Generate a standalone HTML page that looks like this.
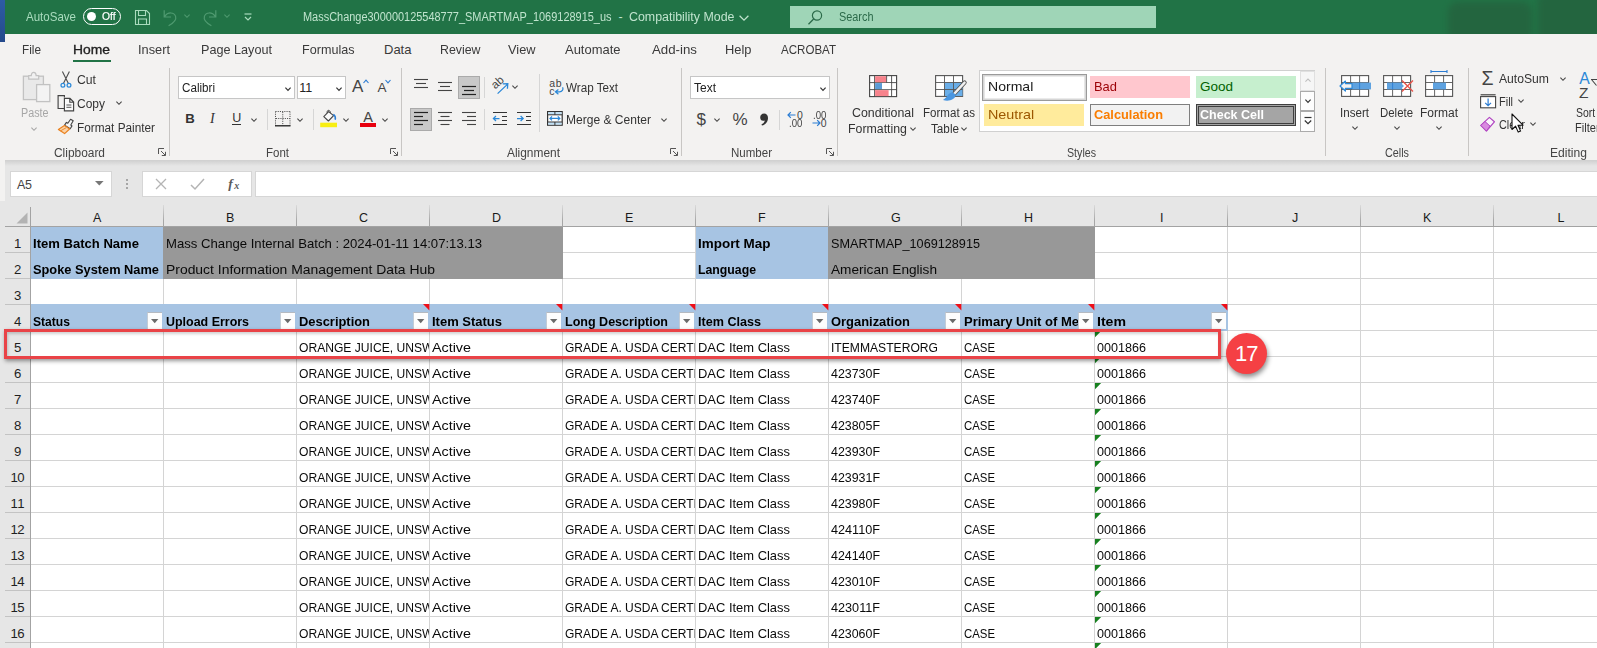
<!DOCTYPE html>
<html lang="en"><head><meta charset="utf-8"><title>Excel</title>
<style>
html,body{margin:0;padding:0;}
html{width:1597px;height:648px;overflow:hidden;background:#e6e6e6;}
body{width:1597px;height:648px;overflow:hidden;position:relative;background:#e6e6e6;font-family:"Liberation Sans", sans-serif;}
div,svg,span{position:absolute;box-sizing:border-box;}
svg{overflow:visible;}
.t{white-space:pre;line-height:1;display:block;}
</style></head>
<body>
<div style="left:0;top:0;width:1597px;height:648px;overflow:hidden;">
<div style="left:0px;top:0px;width:1597px;height:34px;background:#217346;"></div>
<div style="left:0px;top:34px;width:1597px;height:126px;background:#f3f2f1;"></div>
<div style="left:0px;top:159px;width:5px;height:42px;background:#f3f2f1;"></div>
<div style="left:0px;top:0px;width:5px;height:42px;background:linear-gradient(#2d5ca4,#244a8c);"></div>
<div style="left:5px;top:160px;width:1592px;height:6px;background:linear-gradient(rgba(0,0,0,0.10),rgba(0,0,0,0));"></div>
<span class="t" style="left:26px;top:10.3px;font-size:13px;color:#a9dbbd;transform:scaleX(0.8869);transform-origin:0 0;">AutoSave</span>
<div style="left:83px;top:8px;width:38px;height:17px;border:1.3px solid #fff;border-radius:9px;"></div>
<div style="left:87px;top:12px;width:9px;height:9px;border-radius:50%;background:#fff;"></div>
<span class="t" style="left:102px;top:11.27px;font-size:11.5px;color:#fff;transform:scaleX(0.8982);transform-origin:0 0;-webkit-text-stroke:0.2px #fff;">Off</span>
<svg style="left:134px;top:9px;" width="17" height="17" viewBox="0 0 17 17"><path d="M1.5 1.5h11l3 3v11h-14z M4.5 1.5v5h7v-5 M4.5 15.5v-5.5h8v5.5" fill="none" stroke="#a9dbbd" stroke-width="1.1"/></svg>
<svg style="left:162px;top:9px;" width="17" height="18" viewBox="0 0 17 18"><path d="M2.2 1.2v6.8h6.8 M2.6 7.6c3.2-5 9.6-4.6 11 -0.2c1.2 3.8-2.4 6.8-7 9.4" fill="none" stroke="#4f9a70" stroke-width="1.2"/></svg>
<svg style="left:182.4px;top:12px;" width="10" height="8" viewBox="0 0 10 8"><path d="M2.4 2.7 L5 5.3 L7.6 2.7" fill="none" stroke="#4f9a70" stroke-width="1.1"/></svg>
<svg style="left:201px;top:9px;" width="17" height="18" viewBox="0 0 17 18"><path d="M14.8 1.2v6.8h-6.8 M14.4 7.6c-3.2-5-9.6-4.6-11-0.2c-1.2 3.8 2.4 6.8 7 9.4" fill="none" stroke="#4f9a70" stroke-width="1.2"/></svg>
<svg style="left:221.5px;top:12px;" width="10" height="8" viewBox="0 0 10 8"><path d="M2.4 2.7 L5 5.3 L7.6 2.7" fill="none" stroke="#4f9a70" stroke-width="1.1"/></svg>
<svg style="left:243px;top:12px;" width="10" height="10" viewBox="0 0 10 10"><path d="M1.5 2h7" stroke="#a9dbbd" stroke-width="1.2"/><path d="M2 5l3 3l3-3" fill="none" stroke="#a9dbbd" stroke-width="1.2"/></svg>
<span class="t" style="left:303px;top:11.42px;font-size:12.5px;color:#c0e4ce;transform:scaleX(0.8761);transform-origin:0 0;">MassChange300000125548777_SMARTMAP_1069128915_us</span>
<span class="t" style="left:618.5px;top:11.42px;font-size:12.5px;color:#c0e4ce;letter-spacing:0.328px;">-</span>
<span class="t" style="left:628.5px;top:11.42px;font-size:12.5px;color:#c0e4ce;transform:scaleX(0.9925);transform-origin:0 0;">Compatibility Mode</span>
<svg style="left:738.5px;top:14px;" width="10" height="8" viewBox="0 0 10 8"><path d="M0.5999999999999996 1.7999999999999998 L5 6.2 L9.4 1.7999999999999998" fill="none" stroke="#c0e4ce" stroke-width="1.25"/></svg>
<div style="left:790px;top:6px;width:366px;height:22px;background:#9fd5b7;"></div>
<svg style="left:806px;top:9px;" width="18" height="18" viewBox="0 0 18 18"><circle cx="11" cy="6.5" r="4.6" fill="none" stroke="#2b6a49" stroke-width="1.2"/><path d="M7.6 10L2.5 15.2" stroke="#2b6a49" stroke-width="1.3"/></svg>
<span class="t" style="left:839px;top:10.92px;font-size:12.5px;color:#2b6a49;transform:scaleX(0.8710);transform-origin:0 0;">Search</span>
<div style="left:1400px;top:0;width:197px;height:34px;overflow:hidden;"><div style="left:48px;top:2px;width:84px;height:40px;background:#24643f;border-radius:10px;filter:blur(3px);opacity:.9;"></div><div style="left:138px;top:-6px;width:70px;height:50px;background:#24643f;border-radius:8px;filter:blur(3px);opacity:.9;"></div></div>
<span class="t" style="left:22px;top:43.0px;font-size:13px;color:#3a3a3a;transform:scaleX(0.9068);transform-origin:0 0;">File</span>
<span class="t" style="left:73px;top:43.0px;font-size:13px;color:#222;transform:scaleX(1.0667);transform-origin:0 0;-webkit-text-stroke:0.32px #222;">Home</span>
<span class="t" style="left:138px;top:43.0px;font-size:13px;color:#3a3a3a;transform:scaleX(0.9841);transform-origin:0 0;">Insert</span>
<span class="t" style="left:201px;top:43.0px;font-size:13px;color:#3a3a3a;transform:scaleX(0.9724);transform-origin:0 0;">Page Layout</span>
<span class="t" style="left:302px;top:43.0px;font-size:13px;color:#3a3a3a;transform:scaleX(0.9689);transform-origin:0 0;">Formulas</span>
<span class="t" style="left:384px;top:43.0px;font-size:13px;color:#3a3a3a;">Data</span>
<span class="t" style="left:440px;top:43.0px;font-size:13px;color:#3a3a3a;transform:scaleX(0.9501);transform-origin:0 0;">Review</span>
<span class="t" style="left:508px;top:43.0px;font-size:13px;color:#3a3a3a;transform:scaleX(0.9838);transform-origin:0 0;">View</span>
<span class="t" style="left:565px;top:43.0px;font-size:13px;color:#3a3a3a;transform:scaleX(0.9972);transform-origin:0 0;">Automate</span>
<span class="t" style="left:652px;top:43.0px;font-size:13px;color:#3a3a3a;transform:scaleX(1.0209);transform-origin:0 0;">Add-ins</span>
<span class="t" style="left:725px;top:43.0px;font-size:13px;color:#3a3a3a;transform:scaleX(0.9907);transform-origin:0 0;">Help</span>
<span class="t" style="left:781px;top:43.0px;font-size:13px;color:#3a3a3a;transform:scaleX(0.8887);transform-origin:0 0;">ACROBAT</span>
<div style="left:73px;top:59.5px;width:38px;height:2.5px;background:#217346;"></div>
<div style="left:169px;top:68px;width:1px;height:88px;background:#c8c6c4;"></div>
<div style="left:401px;top:68px;width:1px;height:88px;background:#c8c6c4;"></div>
<div style="left:681px;top:68px;width:1px;height:88px;background:#c8c6c4;"></div>
<div style="left:837px;top:68px;width:1px;height:88px;background:#c8c6c4;"></div>
<div style="left:1325px;top:68px;width:1px;height:88px;background:#c8c6c4;"></div>
<div style="left:1468px;top:68px;width:1px;height:88px;background:#c8c6c4;"></div>
<span class="t" style="left:54px;top:146.64px;font-size:12px;color:#444;transform:scaleX(0.9927);transform-origin:0 0;">Clipboard</span>
<svg style="left:158px;top:148px;" width="8" height="8" viewBox="0 0 8 8"><path d="M0.5 6v-5.5h5.5 M3 3l4.3 4.3 M7.5 3.8v3.7h-3.7" fill="none" stroke="#555" stroke-width="1"/></svg>
<span class="t" style="left:266px;top:146.64px;font-size:12px;color:#444;transform:scaleX(0.9577);transform-origin:0 0;">Font</span>
<svg style="left:390px;top:148px;" width="8" height="8" viewBox="0 0 8 8"><path d="M0.5 6v-5.5h5.5 M3 3l4.3 4.3 M7.5 3.8v3.7h-3.7" fill="none" stroke="#555" stroke-width="1"/></svg>
<span class="t" style="left:507px;top:146.64px;font-size:12px;color:#444;transform:scaleX(0.9930);transform-origin:0 0;">Alignment</span>
<svg style="left:670px;top:148px;" width="8" height="8" viewBox="0 0 8 8"><path d="M0.5 6v-5.5h5.5 M3 3l4.3 4.3 M7.5 3.8v3.7h-3.7" fill="none" stroke="#555" stroke-width="1"/></svg>
<span class="t" style="left:731px;top:146.64px;font-size:12px;color:#444;transform:scaleX(0.9605);transform-origin:0 0;">Number</span>
<svg style="left:826px;top:148px;" width="8" height="8" viewBox="0 0 8 8"><path d="M0.5 6v-5.5h5.5 M3 3l4.3 4.3 M7.5 3.8v3.7h-3.7" fill="none" stroke="#555" stroke-width="1"/></svg>
<span class="t" style="left:1067px;top:146.64px;font-size:12px;color:#444;transform:scaleX(0.8872);transform-origin:0 0;">Styles</span>
<span class="t" style="left:1385px;top:146.64px;font-size:12px;color:#444;transform:scaleX(0.8998);transform-origin:0 0;">Cells</span>
<span class="t" style="left:1550px;top:146.64px;font-size:12px;color:#444;transform:scaleX(1.0081);transform-origin:0 0;">Editing</span>
<svg style="left:22px;top:71px;" width="29" height="32" viewBox="0 0 29 32"><rect x="1.4" y="5.2" width="20" height="23.4" fill="#e9e9e9" stroke="#c2c2c2" stroke-width="1.3"/><path d="M6.7 8.2V4.6h2.6c0-2.1 1-3.3 2.4-3.3s2.4 1.2 2.4 3.3h2.6v3.6z" fill="#f1f1f1" stroke="#c2c2c2" stroke-width="1.2"/><rect x="14.6" y="13.6" width="13.2" height="17" fill="#f3f3f3" stroke="#c2c2c2" stroke-width="1.3"/></svg>
<span class="t" style="left:20.5px;top:107.02px;font-size:12.5px;color:#a6a6a6;transform:scaleX(0.8602);transform-origin:0 0;">Paste</span>
<svg style="left:28.5px;top:124.5px;" width="10" height="8" viewBox="0 0 10 8"><path d="M2.4 2.7 L5 5.3 L7.6 2.7" fill="none" stroke="#a6a6a6" stroke-width="1.1"/></svg>
<svg style="left:59px;top:71px;" width="14" height="17" viewBox="0 0 14 17"><path d="M3.4 0.5L9.4 12.4 M10.4 0.5L4.4 12.4" stroke="#505050" stroke-width="1.15" fill="none"/><circle cx="3.9" cy="14.2" r="1.9" fill="none" stroke="#2b88d8" stroke-width="1.25"/><circle cx="10" cy="14.2" r="1.9" fill="none" stroke="#2b88d8" stroke-width="1.25"/></svg>
<span class="t" style="left:77px;top:74.42px;font-size:12.5px;color:#333;transform:scaleX(0.9767);transform-origin:0 0;">Cut</span>
<svg style="left:57px;top:95px;" width="18" height="17" viewBox="0 0 18 17"><path d="M7.4 2.6V0.6H1.1v12.9h6" fill="none" stroke="#444" stroke-width="1.15"/><path d="M7.4 3.4h5.6l3.6 3.6v8.8H7.4z M12.8 3.6v3.6h3.6" fill="#fafafa" stroke="#444" stroke-width="1.15"/><path d="M9.4 10h5 M9.4 12.3h5" stroke="#444" stroke-width="0.9"/></svg>
<span class="t" style="left:77px;top:98.22px;font-size:12.5px;color:#333;transform:scaleX(0.9593);transform-origin:0 0;">Copy</span>
<svg style="left:113.5px;top:99.3px;" width="10" height="8" viewBox="0 0 10 8"><path d="M2.4 2.7 L5 5.3 L7.6 2.7" fill="none" stroke="#444" stroke-width="1.1"/></svg>
<svg style="left:57px;top:118px;" width="18" height="17" viewBox="0 0 18 17"><path d="M13.6 1.2l2.6 1.6l-2.4 4.2l1.2 0.9l-1.8 2.8l-5.6-3.6l1.8-2.7l1.4 0.8z" fill="#f6f6f6" stroke="#444" stroke-width="1.1" stroke-linejoin="round"/><path d="M7.4 7.6l5.2 3.4l-5 4.6l-6.2-4.2z" fill="#fbd3a8" stroke="#ea8220" stroke-width="1.2" stroke-linejoin="round"/><path d="M3.6 12.8l5.4-3" stroke="#ea8220" stroke-width="0.9"/></svg>
<span class="t" style="left:77px;top:122.42px;font-size:12.5px;color:#333;transform:scaleX(0.9435);transform-origin:0 0;">Format Painter</span>
<div style="left:178px;top:76px;width:117px;height:23px;background:#fff;border:1px solid #c6c6c6;"></div>
<span class="t" style="left:181.5px;top:82.42px;font-size:12.5px;color:#222;transform:scaleX(0.9312);transform-origin:0 0;">Calibri</span>
<svg style="left:283px;top:84.5px;" width="10" height="8" viewBox="0 0 10 8"><path d="M2.4 2.7 L5 5.3 L7.6 2.7" fill="none" stroke="#333" stroke-width="1.2"/></svg>
<div style="left:296.5px;top:76px;width:49px;height:23px;background:#fff;border:1px solid #c6c6c6;"></div>
<span class="t" style="left:299.3px;top:82.42px;font-size:12.5px;color:#222;">11</span>
<svg style="left:334px;top:84.5px;" width="10" height="8" viewBox="0 0 10 8"><path d="M2.4 2.7 L5 5.3 L7.6 2.7" fill="none" stroke="#333" stroke-width="1.2"/></svg>
<span class="t" style="left:352px;top:77.61px;font-size:17px;color:#444;letter-spacing:0.156px;">A</span>
<svg style="left:362.5px;top:79px;" width="6" height="5" viewBox="0 0 6 5"><path d="M0.5 4L3 1.2L5.5 4" fill="none" stroke="#2b7cd3" stroke-width="1.1"/></svg>
<span class="t" style="left:377.5px;top:80.57px;font-size:13.5px;color:#444;letter-spacing:0.484px;">A</span>
<svg style="left:385.2px;top:79px;" width="6" height="5" viewBox="0 0 6 5"><path d="M0.5 1L3 3.8L5.5 1" fill="none" stroke="#2b7cd3" stroke-width="1.1"/></svg>
<span class="t" style="left:185.2px;top:112.33px;font-size:13.2px;color:#333;font-weight:700;letter-spacing:-1.531px;">B</span>
<span class="t" style="left:210px;top:111.65px;font-size:14px;color:#333;font-style:italic;letter-spacing:0.828px;font-family:'Liberation Serif',serif;">I</span>
<span class="t" style="left:232.2px;top:111.92px;font-size:12.5px;color:#333;letter-spacing:-0.631px;">U</span>
<div style="left:232px;top:123.8px;width:8.8px;height:1.1px;background:#333;"></div>
<svg style="left:249px;top:115.5px;" width="10" height="8" viewBox="0 0 10 8"><path d="M2.4 2.7 L5 5.3 L7.6 2.7" fill="none" stroke="#444" stroke-width="1.1"/></svg>
<div style="left:267px;top:109px;width:1px;height:21px;background:#d6d6d6;"></div>
<svg style="left:275px;top:111px;" width="16" height="16" viewBox="0 0 16 16"><path d="M0.5 0.5h14.5 M0.5 0.5v14 M15 0.5v14 M7.75 1v13.5 M1 7.5h14" fill="none" stroke="#555" stroke-width="1" stroke-dasharray="1.1 1.1"/><path d="M0 14.8h15.5" stroke="#1a1a1a" stroke-width="1.3"/></svg>
<svg style="left:295px;top:115.5px;" width="10" height="8" viewBox="0 0 10 8"><path d="M2.4 2.7 L5 5.3 L7.6 2.7" fill="none" stroke="#444" stroke-width="1.1"/></svg>
<div style="left:313px;top:109px;width:1px;height:21px;background:#d6d6d6;"></div>
<svg style="left:320px;top:108px;" width="18" height="20" viewBox="0 0 18 20"><path d="M8.6 3.6l-4.8 5l4.6 4.4l5.2-5.4z" fill="#fafafa" stroke="#444" stroke-width="1.1" stroke-linejoin="round"/><path d="M7.2 5c-0.4-2 0.6-3 1.8-2.6c0.9 0.3 1.3 1.2 1.4 2.4" fill="none" stroke="#444" stroke-width="1"/><path d="M13.4 6.4c1.8 1.4 2.4 3.2 1.8 5.4" fill="none" stroke="#2b7cd3" stroke-width="1.5"/><rect x="0.2" y="14.7" width="16.8" height="4.5" fill="#f8ee12"/></svg>
<svg style="left:341px;top:115.5px;" width="10" height="8" viewBox="0 0 10 8"><path d="M2.4 2.7 L5 5.3 L7.6 2.7" fill="none" stroke="#444" stroke-width="1.1"/></svg>
<span class="t" style="left:363.2px;top:110.03px;font-size:14.5px;color:#444;letter-spacing:0.728px;">A</span>
<div style="left:359.5px;top:122.5px;width:16px;height:4.5px;background:#e8000f;"></div>
<svg style="left:380px;top:115.5px;" width="10" height="8" viewBox="0 0 10 8"><path d="M2.4 2.7 L5 5.3 L7.6 2.7" fill="none" stroke="#444" stroke-width="1.1"/></svg>
<svg style="left:413px;top:77px;" width="18" height="18" viewBox="0 0 18 18"><path d="M1 2.5H15" stroke="#444" stroke-width="1.1"/><path d="M3 6.5H13" stroke="#444" stroke-width="1.1"/><path d="M1 10.5H15" stroke="#444" stroke-width="1.1"/></svg>
<svg style="left:437px;top:75.7px;" width="18" height="18" viewBox="0 0 18 18"><path d="M1 6.5H15" stroke="#444" stroke-width="1.1"/><path d="M3 10.5H13" stroke="#444" stroke-width="1.1"/><path d="M1 14.5H15" stroke="#444" stroke-width="1.1"/></svg>
<div style="left:458px;top:76px;width:22px;height:22.5px;background:#c8c8c8;border:1px solid #aaaaaa;"></div>
<svg style="left:461px;top:76px;" width="18" height="18" viewBox="0 0 18 18"><path d="M1 10.5H15" stroke="#222" stroke-width="1.2"/><path d="M3 14.5H13" stroke="#222" stroke-width="1.2"/><path d="M1 18.5H15" stroke="#222" stroke-width="1.2"/></svg>
<svg style="left:489px;top:76px;" width="21" height="20" viewBox="0 0 21 20"><path d="M8.6 17.6L18.4 8.4 M13.8 7.8l5-0.1l-0.4 5" fill="none" stroke="#2b88d8" stroke-width="1.3"/><text x="0" y="0" transform="translate(6.2 13.6) rotate(-42)" font-size="11.5" fill="#444" font-family="Liberation Sans, sans-serif">ab</text></svg>
<svg style="left:510px;top:83px;" width="10" height="8" viewBox="0 0 10 8"><path d="M2.4 2.7 L5 5.3 L7.6 2.7" fill="none" stroke="#444" stroke-width="1.1"/></svg>
<div style="left:484px;top:77px;width:1px;height:21px;background:#d6d6d6;"></div>
<div style="left:539px;top:74px;width:1px;height:58px;background:#d6d6d6;"></div>
<span class="t" style="left:549.3px;top:78.11px;font-size:10.5px;color:#444;letter-spacing:0.513px;">ab</span>
<span class="t" style="left:549.3px;top:85.61px;font-size:10.5px;color:#444;letter-spacing:-0.050px;">c</span>
<svg style="left:554px;top:86px;" width="10" height="9" viewBox="0 0 10 9"><path d="M8.6 1.2c1.2 2.6-0.6 4.6-3 4.6H1.6 M4.4 3.4L1.4 5.8l3 2.4" fill="none" stroke="#2b88d8" stroke-width="1.25"/></svg>
<span class="t" style="left:566px;top:82.42px;font-size:12.5px;color:#333;transform:scaleX(0.9317);transform-origin:0 0;">Wrap Text</span>
<div style="left:410px;top:108px;width:22px;height:22.5px;background:#c8c8c8;border:1px solid #aaaaaa;"></div>
<svg style="left:413px;top:110px;" width="18" height="18" viewBox="0 0 18 18"><path d="M1 2.5H15" stroke="#222" stroke-width="1.2"/><path d="M1 6.5H10" stroke="#222" stroke-width="1.2"/><path d="M1 10.5H15" stroke="#222" stroke-width="1.2"/><path d="M1 14.5H10" stroke="#222" stroke-width="1.2"/></svg>
<svg style="left:437px;top:110px;" width="18" height="18" viewBox="0 0 18 18"><path d="M1 2.5H15" stroke="#444" stroke-width="1.1"/><path d="M3.5 6.5H12.5" stroke="#444" stroke-width="1.1"/><path d="M1 10.5H15" stroke="#444" stroke-width="1.1"/><path d="M3.5 14.5H12.5" stroke="#444" stroke-width="1.1"/></svg>
<svg style="left:461px;top:110px;" width="18" height="18" viewBox="0 0 18 18"><path d="M1 2.5H15" stroke="#444" stroke-width="1.1"/><path d="M6 6.5H15" stroke="#444" stroke-width="1.1"/><path d="M1 10.5H15" stroke="#444" stroke-width="1.1"/><path d="M6 14.5H15" stroke="#444" stroke-width="1.1"/></svg>
<div style="left:484px;top:109px;width:1px;height:21px;background:#d6d6d6;"></div>
<svg style="left:492px;top:110px;" width="16" height="17" viewBox="0 0 16 17"><path d="M1 2.5h14 M10 6.5h5 M10 10.5h5 M1 14.5h14" stroke="#333" stroke-width="1.15"/><path d="M7.5 8.5H1.5 M4 6l-2.6 2.5L4 11" fill="none" stroke="#2b88d8" stroke-width="1.25"/></svg>
<svg style="left:516px;top:110px;" width="16" height="17" viewBox="0 0 16 17"><path d="M1 2.5h14 M10 6.5h5 M10 10.5h5 M1 14.5h14" stroke="#333" stroke-width="1.15"/><path d="M1 8.5h6 M4.6 6l2.6 2.5L4.6 11" fill="none" stroke="#2b88d8" stroke-width="1.25"/></svg>
<svg style="left:546.5px;top:111px;" width="16" height="15" viewBox="0 0 16 15"><rect x="0.6" y="0.6" width="14.6" height="13.6" fill="#fff" stroke="#333" stroke-width="1.2"/><rect x="1.2" y="1.2" width="13.4" height="2.3" fill="#bfe0f6"/><rect x="1.2" y="11.3" width="13.4" height="2.3" fill="#bfe0f6"/><path d="M0.6 3.8h14.6 M0.6 11h14.6 M7.9 0.6v3.2 M7.9 11v3.2" stroke="#333" stroke-width="1"/><path d="M3 7.4h9.8 M5 5.4L3 7.4l2 2 M10.8 5.4l2 2l-2 2" fill="none" stroke="#2b88d8" stroke-width="1.25"/></svg>
<span class="t" style="left:566px;top:114.42px;font-size:12.5px;color:#333;transform:scaleX(0.9633);transform-origin:0 0;">Merge &amp; Center</span>
<svg style="left:659px;top:115.5px;" width="10" height="8" viewBox="0 0 10 8"><path d="M2.4 2.7 L5 5.3 L7.6 2.7" fill="none" stroke="#444" stroke-width="1.1"/></svg>
<div style="left:690px;top:76px;width:140px;height:23px;background:#fff;border:1px solid #c6c6c6;"></div>
<span class="t" style="left:693.5px;top:82.42px;font-size:12.5px;color:#222;transform:scaleX(0.9591);transform-origin:0 0;">Text</span>
<svg style="left:818px;top:84.5px;" width="10" height="8" viewBox="0 0 10 8"><path d="M2.4 2.7 L5 5.3 L7.6 2.7" fill="none" stroke="#333" stroke-width="1.2"/></svg>
<span class="t" style="left:696.5px;top:110.61px;font-size:17px;color:#444;letter-spacing:-1.169px;">$</span>
<svg style="left:712px;top:115.5px;" width="10" height="8" viewBox="0 0 10 8"><path d="M2.4 2.7 L5 5.3 L7.6 2.7" fill="none" stroke="#444" stroke-width="1.1"/></svg>
<span class="t" style="left:732.5px;top:111.11px;font-size:17px;color:#444;letter-spacing:-0.125px;">%</span>
<svg style="left:759px;top:113px;" width="10" height="14" viewBox="0 0 10 14"><path d="M5 0.6c2.4 0 4 1.8 4 4.4c0 3.6-2.3 6.6-6 7.6l-0.6-1.2c2-0.9 3.2-2.3 3.4-4c-0.5 0.3-1 0.4-1.6 0.4c-1.8 0-3-1.3-3-3.3c0-2.2 1.6-3.9 3.8-3.9z" fill="#333"/></svg>
<div style="left:779px;top:109.5px;width:1px;height:20.5px;background:#d6d6d6;"></div>
<span class="t" style="left:797px;top:110.11px;font-size:10.5px;color:#444;letter-spacing:-0.444px;">0</span>
<span class="t" style="left:789.2px;top:118.01px;font-size:10.5px;color:#444;transform:scaleX(0.9172);transform-origin:0 0;">.00</span>
<svg style="left:787px;top:110.6px;" width="9" height="8" viewBox="0 0 9 8"><path d="M8.5 4H1 M3.8 1.2L1 4l2.8 2.8" fill="none" stroke="#2b7cd3" stroke-width="1.2"/></svg>
<span class="t" style="left:813px;top:110.11px;font-size:10.5px;color:#444;transform:scaleX(0.9172);transform-origin:0 0;">.00</span>
<span class="t" style="left:820.8px;top:118.01px;font-size:10.5px;color:#444;letter-spacing:-0.444px;">0</span>
<svg style="left:811.5px;top:118.6px;" width="9" height="8" viewBox="0 0 9 8"><path d="M0.5 4H8 M5.2 1.2L8 4L5.2 6.8" fill="none" stroke="#2b7cd3" stroke-width="1.2"/></svg>
<svg style="left:869px;top:75px;" width="29" height="23" viewBox="0 0 29 23"><rect x="0.6" y="0.6" width="27" height="21" fill="#fff" stroke="#444" stroke-width="1.1"/><path d="M5.6 0.6v21 M22.6 0.6v21 M17.6 0.6v7 M0.6 7.6h27 M0.6 14.6h27" stroke="#444" stroke-width="0.9"/><rect x="6.1" y="1.2" width="11" height="6" fill="#f7838c"/><rect x="6.1" y="8.1" width="7" height="6" fill="#5b9bd5"/><rect x="13.1" y="8.1" width="9" height="6" fill="#fff"/><rect x="6.1" y="15.1" width="13.5" height="6" fill="#f7838c"/></svg>
<span class="t" style="left:852px;top:106.92px;font-size:12.5px;color:#333;transform:scaleX(0.9913);transform-origin:0 0;">Conditional</span>
<span class="t" style="left:848px;top:123.42px;font-size:12.5px;color:#333;transform:scaleX(0.9874);transform-origin:0 0;">Formatting</span>
<svg style="left:908px;top:125px;" width="10" height="8" viewBox="0 0 10 8"><path d="M2.4 2.7 L5 5.3 L7.6 2.7" fill="none" stroke="#444" stroke-width="1.1"/></svg>
<svg style="left:935px;top:75px;" width="31" height="27" viewBox="0 0 31 27"><rect x="0.6" y="0.6" width="27" height="20.8" fill="#fff" stroke="#555" stroke-width="1.1"/><rect x="9.5" y="7.5" width="18" height="13.5" fill="#6aaee8"/><path d="M9.5 0.6v20.8 M18.5 0.6v20.8 M0.6 7.5h27 M0.6 14.5h27" stroke="#555" stroke-width="0.9"/><path d="M29.6 7.6L18.4 19.6" stroke="#555" stroke-width="4.2" stroke-linecap="round"/><path d="M29.6 7.6L18.4 19.6" stroke="#f0f0f0" stroke-width="2.4" stroke-linecap="round"/><path d="M17.6 17.2c-4.6 0.4-4.6 4.6-9.6 7.8c5.6 2.2 12.4-0.6 12.8-5.2z" fill="#4a96e0"/></svg>
<span class="t" style="left:923px;top:106.92px;font-size:12.5px;color:#333;transform:scaleX(0.9242);transform-origin:0 0;">Format as</span>
<span class="t" style="left:931px;top:123.42px;font-size:12.5px;color:#333;transform:scaleX(0.9367);transform-origin:0 0;">Table</span>
<svg style="left:958.8px;top:125px;" width="10" height="8" viewBox="0 0 10 8"><path d="M2.4 2.7 L5 5.3 L7.6 2.7" fill="none" stroke="#444" stroke-width="1.1"/></svg>
<div style="left:979px;top:70px;width:336px;height:62px;background:#fff;border:1px solid #d0d0d0;"></div>
<div style="left:981.5px;top:73.5px;width:105.5px;height:27px;background:#fff;border:1px solid #9a9a9a;box-shadow:inset 0 0 0 1.6px #d6d6d6;"></div>
<span class="t" style="left:988.4px;top:79.57px;font-size:13.5px;color:#1a1a1a;transform:scaleX(1.0410);transform-origin:0 0;">Normal</span>
<div style="left:1090px;top:76px;width:100px;height:22px;background:#ffc7ce;"></div>
<span class="t" style="left:1094px;top:79.57px;font-size:13.5px;color:#9c0006;transform:scaleX(0.9571);transform-origin:0 0;">Bad</span>
<div style="left:1196px;top:76px;width:100px;height:22px;background:#c6efce;"></div>
<span class="t" style="left:1200px;top:79.57px;font-size:13.5px;color:#006100;">Good</span>
<div style="left:984px;top:104px;width:100px;height:22px;background:#ffeb9c;"></div>
<span class="t" style="left:988.4px;top:107.87px;font-size:13.5px;color:#9c5700;transform:scaleX(1.0636);transform-origin:0 0;">Neutral</span>
<div style="left:1090px;top:104px;width:100px;height:22px;background:#f2f2f2;border:1px solid #7f7f7f;"></div>
<span class="t" style="left:1094px;top:107.87px;font-size:13.5px;color:#fa7d00;font-weight:700;transform:scaleX(0.9482);transform-origin:0 0;">Calculation</span>
<div style="left:1196px;top:104px;width:100px;height:22px;background:#a5a5a5;border:3px double #3f3f3f;"></div>
<span class="t" style="left:1200px;top:107.87px;font-size:13.5px;color:#fff;font-weight:700;transform:scaleX(0.9271);transform-origin:0 0;">Check Cell</span>
<div style="left:1300px;top:71px;width:15px;height:20px;background:#f6f6f6;border:1px solid #e0e0e0;"></div>
<svg style="left:1303px;top:76px;" width="10" height="8" viewBox="0 0 10 8"><path d="M2.4 5.6L5 3L7.6 5.6" fill="none" stroke="#c0c0c0" stroke-width="1.1"/></svg>
<div style="left:1300px;top:91px;width:15px;height:20px;background:#fdfdfd;border:1px solid #ababab;"></div>
<svg style="left:1302.5px;top:96.5px;" width="10" height="8" viewBox="0 0 10 8"><path d="M2.4 2.7 L5 5.3 L7.6 2.7" fill="none" stroke="#333" stroke-width="1.2"/></svg>
<div style="left:1300px;top:111px;width:15px;height:21px;background:#fdfdfd;border:1px solid #ababab;"></div>
<svg style="left:1303px;top:116px;" width="10" height="10" viewBox="0 0 10 10"><path d="M1.5 1.5h7" stroke="#333" stroke-width="1.2"/><path d="M1.8 4.5l3.2 3.2l3.2-3.2" fill="none" stroke="#333" stroke-width="1.2"/></svg>
<svg style="left:1339px;top:75px;" width="33" height="23" viewBox="0 0 33 23"><rect x="2.6" y="0.6" width="27" height="20.8" fill="#fff" stroke="#555" stroke-width="1.1"/><path d="M11.6 0.6v20.8 M20.6 0.6v20.8 M2.6 7.5h27 M2.6 14.5h27" stroke="#555" stroke-width="0.9"/><rect x="13" y="7.6" width="19" height="6.8" fill="#5ea2e0"/><path d="M11.6 7.6v6.8 M20.6 7.6v6.8" stroke="#2b7cd3" stroke-width="0.9"/><path d="M13 8.6H6.4V6L1 11l5.4 5v-2.6H13z" fill="#f3f2f1" stroke="#2b88d8" stroke-width="1.2" stroke-linejoin="round"/></svg>
<span class="t" style="left:1340px;top:106.92px;font-size:12.5px;color:#333;transform:scaleX(0.9275);transform-origin:0 0;">Insert</span>
<svg style="left:1349.5px;top:124.2px;" width="10" height="8" viewBox="0 0 10 8"><path d="M2.4 2.7 L5 5.3 L7.6 2.7" fill="none" stroke="#444" stroke-width="1.1"/></svg>
<svg style="left:1381px;top:75px;" width="35" height="23" viewBox="0 0 35 23"><rect x="2.6" y="0.6" width="27" height="20.8" fill="#fff" stroke="#555" stroke-width="1.1"/><path d="M11.6 0.6v20.8 M20.6 0.6v20.8 M2.6 7.5h27 M2.6 14.5h27" stroke="#555" stroke-width="0.9"/><rect x="6" y="7.6" width="15" height="6.8" fill="#5ea2e0"/><path d="M11.6 7.6v6.8" stroke="#2b7cd3" stroke-width="0.9"/><path d="M19 7.6l4 3.4l-4 3.4z" fill="#5ea2e0"/><path d="M21 5.5l11 11 M32 5.5l-11 11" stroke="#e8534a" stroke-width="1.3"/></svg>
<span class="t" style="left:1380px;top:106.92px;font-size:12.5px;color:#333;transform:scaleX(0.9131);transform-origin:0 0;">Delete</span>
<svg style="left:1391.8px;top:124.2px;" width="10" height="8" viewBox="0 0 10 8"><path d="M2.4 2.7 L5 5.3 L7.6 2.7" fill="none" stroke="#444" stroke-width="1.1"/></svg>
<svg style="left:1423px;top:70px;" width="33" height="28" viewBox="0 0 33 28"><path d="M8 1.5h16 M8 0v3 M24 0v3" stroke="#2b7cd3" stroke-width="1.1"/><g transform="translate(0,5)"><rect x="2.6" y="0.6" width="27" height="20.8" fill="#fff" stroke="#555" stroke-width="1.1"/><path d="M11.6 0.6v20.8 M20.6 0.6v20.8 M2.6 7.5h27 M2.6 14.5h27" stroke="#555" stroke-width="0.9"/><rect x="10" y="7.6" width="13" height="6.8" fill="#5ea2e0"/></g></svg>
<span class="t" style="left:1420px;top:106.92px;font-size:12.5px;color:#333;transform:scaleX(0.9597);transform-origin:0 0;">Format</span>
<svg style="left:1433.5px;top:124.2px;" width="10" height="8" viewBox="0 0 10 8"><path d="M2.4 2.7 L5 5.3 L7.6 2.7" fill="none" stroke="#444" stroke-width="1.1"/></svg>
<span class="t" style="left:1481.5px;top:69.49px;font-size:19.5px;color:#444;letter-spacing:0.438px;">Σ</span>
<span class="t" style="left:1499px;top:73.42px;font-size:12.5px;color:#333;transform:scaleX(0.9723);transform-origin:0 0;">AutoSum</span>
<svg style="left:1557.5px;top:74.6px;" width="10" height="8" viewBox="0 0 10 8"><path d="M2.4 2.7 L5 5.3 L7.6 2.7" fill="none" stroke="#444" stroke-width="1.1"/></svg>
<svg style="left:1480px;top:93.6px;" width="17" height="15" viewBox="0 0 17 15"><path d="M0.6 0.8h15" stroke="#444" stroke-width="1.2"/><rect x="0.6" y="2.6" width="15" height="11.2" fill="#fff" stroke="#444" stroke-width="1.1"/><path d="M8.1 4.5v7 M5.2 8.8l2.9 2.9l2.9-2.9" fill="none" stroke="#2b7cd3" stroke-width="1.2"/></svg>
<span class="t" style="left:1499px;top:96.42px;font-size:12.5px;color:#333;transform:scaleX(0.8767);transform-origin:0 0;">Fill</span>
<svg style="left:1515.5px;top:97.2px;" width="10" height="8" viewBox="0 0 10 8"><path d="M2.4 2.7 L5 5.3 L7.6 2.7" fill="none" stroke="#444" stroke-width="1.1"/></svg>
<svg style="left:1480px;top:116px;" width="16" height="16" viewBox="0 0 16 16"><path d="M0.8 9.4L9.4 1.4l5 4.4l-8 9.2z" fill="#faf6fb" stroke="#b146c2" stroke-width="1.2" stroke-linejoin="round"/><path d="M0.8 9.4l4.2-3.9l5 4.6l-3.6 4.9z" fill="#d98be0" stroke="#b146c2" stroke-width="1" stroke-linejoin="round"/></svg>
<span class="t" style="left:1499px;top:119.42px;font-size:12.5px;color:#333;transform:scaleX(0.8703);transform-origin:0 0;">Clear</span>
<svg style="left:1528px;top:120.2px;" width="10" height="8" viewBox="0 0 10 8"><path d="M2.4 2.7 L5 5.3 L7.6 2.7" fill="none" stroke="#444" stroke-width="1.1"/></svg>
<span class="t" style="left:1579.2px;top:70.93px;font-size:15.8px;color:#2b88d8;letter-spacing:-1.147px;">A</span>
<span class="t" style="left:1579px;top:85.38px;font-size:15.5px;color:#444;letter-spacing:0.031px;">Z</span>
<svg style="left:1591px;top:78.5px;" width="8" height="10" viewBox="0 0 8 10"><path d="M0 0.5h9 M0.5 0.5l5 6" fill="none" stroke="#444" stroke-width="1.1"/></svg>
<span class="t" style="left:1576.2px;top:106.92px;font-size:12.5px;color:#333;transform:scaleX(0.8345);transform-origin:0 0;">Sort &amp;</span>
<span class="t" style="left:1574.6px;top:122.42px;font-size:12.5px;color:#333;transform:scaleX(0.8855);transform-origin:0 0;">Filter</span>
<svg style="left:1511px;top:113px;" width="14" height="21" viewBox="0 0 14 21"><path d="M1 1v15.5l3.6-3.4l2.6 6l2.4-1l-2.6-5.9h5z" fill="#fff" stroke="#111" stroke-width="1.1" stroke-linejoin="round"/></svg>
<div style="left:10px;top:171px;width:102px;height:26px;background:#fff;border:1px solid #d6d6d6;"></div>
<span class="t" style="left:17px;top:179.22px;font-size:12.5px;color:#444;letter-spacing:-0.297px;">A5</span>
<svg style="left:95px;top:181px;" width="9" height="5" viewBox="0 0 9 5"><path d="M0 0h8.6l-4.3 4.6z" fill="#777"/></svg>
<div style="left:126.2px;top:179.3px;width:2px;height:2px;background:#a6a6a6;"></div>
<div style="left:126.2px;top:183.3px;width:2px;height:2px;background:#a6a6a6;"></div>
<div style="left:126.2px;top:187.3px;width:2px;height:2px;background:#a6a6a6;"></div>
<div style="left:142px;top:171px;width:110px;height:26px;background:#fff;border:1px solid #d6d6d6;"></div>
<svg style="left:155px;top:178px;" width="12" height="12" viewBox="0 0 12 12"><path d="M1 1l10 10 M11 1L1 11" stroke="#b4b4b4" stroke-width="1.3"/></svg>
<svg style="left:190px;top:178px;" width="15" height="12" viewBox="0 0 15 12"><path d="M1 7l4 4L14 1" fill="none" stroke="#b4b4b4" stroke-width="1.5"/></svg>
<span class="t" style="left:228.3px;top:177.17px;font-size:13.5px;color:#5a5a5a;font-weight:700;font-style:italic;letter-spacing:1.500px;font-family:'Liberation Serif',serif;">f</span>
<span class="t" style="left:234.3px;top:181.34px;font-size:10px;color:#5a5a5a;font-weight:700;font-style:italic;font-family:'Liberation Serif',serif;">x</span>
<div style="left:255px;top:171px;width:1360px;height:26px;background:#fff;border:1px solid #d6d6d6;"></div>
<div style="left:31px;top:227px;width:1566px;height:421px;background:#fff;"></div>
<div style="left:163px;top:227px;width:1px;height:421px;background:#d4d4d4;"></div>
<div style="left:296px;top:227px;width:1px;height:421px;background:#d4d4d4;"></div>
<div style="left:429px;top:227px;width:1px;height:421px;background:#d4d4d4;"></div>
<div style="left:562px;top:227px;width:1px;height:421px;background:#d4d4d4;"></div>
<div style="left:695px;top:227px;width:1px;height:421px;background:#d4d4d4;"></div>
<div style="left:828px;top:227px;width:1px;height:421px;background:#d4d4d4;"></div>
<div style="left:961px;top:227px;width:1px;height:421px;background:#d4d4d4;"></div>
<div style="left:1094px;top:227px;width:1px;height:421px;background:#d4d4d4;"></div>
<div style="left:1227px;top:227px;width:1px;height:421px;background:#d4d4d4;"></div>
<div style="left:1360px;top:227px;width:1px;height:421px;background:#d4d4d4;"></div>
<div style="left:1493px;top:227px;width:1px;height:421px;background:#d4d4d4;"></div>
<div style="left:1626px;top:227px;width:1px;height:421px;background:#d4d4d4;"></div>
<div style="left:31px;top:252px;width:1566px;height:1px;background:#d4d4d4;"></div>
<div style="left:31px;top:278px;width:1566px;height:1px;background:#d4d4d4;"></div>
<div style="left:31px;top:304px;width:1566px;height:1px;background:#d4d4d4;"></div>
<div style="left:31px;top:330px;width:1566px;height:1px;background:#d4d4d4;"></div>
<div style="left:31px;top:356px;width:1566px;height:1px;background:#d4d4d4;"></div>
<div style="left:31px;top:382px;width:1566px;height:1px;background:#d4d4d4;"></div>
<div style="left:31px;top:408px;width:1566px;height:1px;background:#d4d4d4;"></div>
<div style="left:31px;top:434px;width:1566px;height:1px;background:#d4d4d4;"></div>
<div style="left:31px;top:460px;width:1566px;height:1px;background:#d4d4d4;"></div>
<div style="left:31px;top:486px;width:1566px;height:1px;background:#d4d4d4;"></div>
<div style="left:31px;top:512px;width:1566px;height:1px;background:#d4d4d4;"></div>
<div style="left:31px;top:538px;width:1566px;height:1px;background:#d4d4d4;"></div>
<div style="left:31px;top:564px;width:1566px;height:1px;background:#d4d4d4;"></div>
<div style="left:31px;top:590px;width:1566px;height:1px;background:#d4d4d4;"></div>
<div style="left:31px;top:616px;width:1566px;height:1px;background:#d4d4d4;"></div>
<div style="left:31px;top:642px;width:1566px;height:1px;background:#d4d4d4;"></div>
<div style="left:31px;top:668px;width:1566px;height:1px;background:#d4d4d4;"></div>
<div style="left:31px;top:227px;width:133px;height:52px;background:#a7c4e3;"></div>
<div style="left:163px;top:227px;width:400px;height:52px;background:#989898;"></div>
<div style="left:696px;top:227px;width:133px;height:52px;background:#a7c4e3;"></div>
<div style="left:828px;top:227px;width:267px;height:52px;background:#989898;"></div>
<div style="left:31px;top:304px;width:1197px;height:27px;background:#a7c4e3;"></div>
<div style="left:5px;top:226px;width:1592px;height:1px;background:#a3a3a3;"></div>
<div style="left:30px;top:207px;width:1px;height:441px;background:#a3a3a3;"></div>
<div style="left:163px;top:205px;width:1px;height:21px;background:linear-gradient(#dadada,#a6a6a6 75%);"></div>
<div style="left:296px;top:205px;width:1px;height:21px;background:linear-gradient(#dadada,#a6a6a6 75%);"></div>
<div style="left:429px;top:205px;width:1px;height:21px;background:linear-gradient(#dadada,#a6a6a6 75%);"></div>
<div style="left:562px;top:205px;width:1px;height:21px;background:linear-gradient(#dadada,#a6a6a6 75%);"></div>
<div style="left:695px;top:205px;width:1px;height:21px;background:linear-gradient(#dadada,#a6a6a6 75%);"></div>
<div style="left:828px;top:205px;width:1px;height:21px;background:linear-gradient(#dadada,#a6a6a6 75%);"></div>
<div style="left:961px;top:205px;width:1px;height:21px;background:linear-gradient(#dadada,#a6a6a6 75%);"></div>
<div style="left:1094px;top:205px;width:1px;height:21px;background:linear-gradient(#dadada,#a6a6a6 75%);"></div>
<div style="left:1227px;top:205px;width:1px;height:21px;background:linear-gradient(#dadada,#a6a6a6 75%);"></div>
<div style="left:1360px;top:205px;width:1px;height:21px;background:linear-gradient(#dadada,#a6a6a6 75%);"></div>
<div style="left:1493px;top:205px;width:1px;height:21px;background:linear-gradient(#dadada,#a6a6a6 75%);"></div>
<div style="left:1626px;top:205px;width:1px;height:21px;background:linear-gradient(#dadada,#a6a6a6 75%);"></div>
<div style="left:5px;top:252px;width:25px;height:1px;background:#c3c3c3;"></div>
<div style="left:5px;top:278px;width:25px;height:1px;background:#c3c3c3;"></div>
<div style="left:5px;top:304px;width:25px;height:1px;background:#c3c3c3;"></div>
<div style="left:5px;top:330px;width:25px;height:1px;background:#c3c3c3;"></div>
<div style="left:5px;top:356px;width:25px;height:1px;background:#c3c3c3;"></div>
<div style="left:5px;top:382px;width:25px;height:1px;background:#c3c3c3;"></div>
<div style="left:5px;top:408px;width:25px;height:1px;background:#c3c3c3;"></div>
<div style="left:5px;top:434px;width:25px;height:1px;background:#c3c3c3;"></div>
<div style="left:5px;top:460px;width:25px;height:1px;background:#c3c3c3;"></div>
<div style="left:5px;top:486px;width:25px;height:1px;background:#c3c3c3;"></div>
<div style="left:5px;top:512px;width:25px;height:1px;background:#c3c3c3;"></div>
<div style="left:5px;top:538px;width:25px;height:1px;background:#c3c3c3;"></div>
<div style="left:5px;top:564px;width:25px;height:1px;background:#c3c3c3;"></div>
<div style="left:5px;top:590px;width:25px;height:1px;background:#c3c3c3;"></div>
<div style="left:5px;top:616px;width:25px;height:1px;background:#c3c3c3;"></div>
<div style="left:5px;top:642px;width:25px;height:1px;background:#c3c3c3;"></div>
<div style="left:5px;top:668px;width:25px;height:1px;background:#c3c3c3;"></div>
<svg style="left:16px;top:212px;" width="12" height="12" viewBox="0 0 12 12"><path d="M11.5 0.5v11h-11z" fill="#b3b3b3"/></svg>
<span class="t" style="left:93.0px;top:211.72px;font-size:12.5px;color:#1a1a1a;letter-spacing:0.656px;">A</span>
<span class="t" style="left:226.0px;top:211.72px;font-size:12.5px;color:#1a1a1a;letter-spacing:0.656px;">B</span>
<span class="t" style="left:359.0px;top:211.72px;font-size:12.5px;color:#1a1a1a;letter-spacing:-0.031px;">C</span>
<span class="t" style="left:492.0px;top:211.72px;font-size:12.5px;color:#1a1a1a;letter-spacing:-0.031px;">D</span>
<span class="t" style="left:625.0px;top:211.72px;font-size:12.5px;color:#1a1a1a;letter-spacing:0.656px;">E</span>
<span class="t" style="left:758.0px;top:211.72px;font-size:12.5px;color:#1a1a1a;letter-spacing:1.359px;">F</span>
<span class="t" style="left:891.0px;top:211.72px;font-size:12.5px;color:#1a1a1a;letter-spacing:-0.734px;">G</span>
<span class="t" style="left:1024.0px;top:211.72px;font-size:12.5px;color:#1a1a1a;letter-spacing:-0.031px;">H</span>
<span class="t" style="left:1160.0px;top:211.72px;font-size:12.5px;color:#1a1a1a;letter-spacing:-0.484px;">I</span>
<span class="t" style="left:1292.0px;top:211.72px;font-size:12.5px;color:#1a1a1a;letter-spacing:-1.250px;">J</span>
<span class="t" style="left:1423.0px;top:211.72px;font-size:12.5px;color:#1a1a1a;letter-spacing:0.656px;">K</span>
<span class="t" style="left:1557.5px;top:211.72px;font-size:12.5px;color:#1a1a1a;letter-spacing:-0.953px;">L</span>
<span class="t" style="left:14.0px;top:236.63px;font-size:13.2px;color:#1f1f1f;letter-spacing:-0.344px;">1</span>
<span class="t" style="left:14.0px;top:262.63px;font-size:13.2px;color:#1f1f1f;letter-spacing:-0.344px;">2</span>
<span class="t" style="left:14.0px;top:288.63px;font-size:13.2px;color:#1f1f1f;letter-spacing:-0.344px;">3</span>
<span class="t" style="left:14.0px;top:314.63px;font-size:13.2px;color:#1f1f1f;letter-spacing:-0.344px;">4</span>
<span class="t" style="left:14.0px;top:340.63px;font-size:13.2px;color:#1f1f1f;letter-spacing:-0.344px;">5</span>
<span class="t" style="left:14.0px;top:366.63px;font-size:13.2px;color:#1f1f1f;letter-spacing:-0.344px;">6</span>
<span class="t" style="left:14.0px;top:392.63px;font-size:13.2px;color:#1f1f1f;letter-spacing:-0.344px;">7</span>
<span class="t" style="left:14.0px;top:418.63px;font-size:13.2px;color:#1f1f1f;letter-spacing:-0.344px;">8</span>
<span class="t" style="left:14.0px;top:444.63px;font-size:13.2px;color:#1f1f1f;letter-spacing:-0.344px;">9</span>
<span class="t" style="left:10.5px;top:470.63px;font-size:13.2px;color:#1f1f1f;letter-spacing:-0.672px;">10</span>
<span class="t" style="left:10.5px;top:496.63px;font-size:13.2px;color:#1f1f1f;letter-spacing:0.297px;">11</span>
<span class="t" style="left:10.5px;top:522.63px;font-size:13.2px;color:#1f1f1f;letter-spacing:-0.672px;">12</span>
<span class="t" style="left:10.5px;top:548.63px;font-size:13.2px;color:#1f1f1f;letter-spacing:-0.672px;">13</span>
<span class="t" style="left:10.5px;top:574.63px;font-size:13.2px;color:#1f1f1f;letter-spacing:-0.672px;">14</span>
<span class="t" style="left:10.5px;top:600.63px;font-size:13.2px;color:#1f1f1f;letter-spacing:-0.672px;">15</span>
<span class="t" style="left:10.5px;top:626.63px;font-size:13.2px;color:#1f1f1f;letter-spacing:-0.672px;">16</span>
<div style="left:33px;top:236.53px;width:130px;height:17.8px;overflow:hidden;"><span class="t" style="left:0;top:0;font-size:13.2px;color:#000;font-weight:700;transform:scaleX(0.9905);transform-origin:0 0;">Item Batch Name</span></div>
<div style="left:33px;top:262.53px;width:130px;height:17.8px;overflow:hidden;"><span class="t" style="left:0;top:0;font-size:13.2px;color:#000;font-weight:700;transform:scaleX(0.9711);transform-origin:0 0;">Spoke System Name</span></div>
<span class="t" style="left:166px;top:236.53px;font-size:13.2px;color:#0a0a0a;transform:scaleX(0.9962);transform-origin:0 0;">Mass Change Internal Batch : 2024-01-11 14:07:13.13</span>
<span class="t" style="left:166px;top:262.53px;font-size:13.2px;color:#0a0a0a;transform:scaleX(1.0544);transform-origin:0 0;">Product Information Management Data Hub</span>
<div style="left:698px;top:236.53px;width:130px;height:17.8px;overflow:hidden;"><span class="t" style="left:0;top:0;font-size:13.2px;color:#000;font-weight:700;transform:scaleX(1.0200);transform-origin:0 0;">Import Map</span></div>
<div style="left:698px;top:262.53px;width:130px;height:17.8px;overflow:hidden;"><span class="t" style="left:0;top:0;font-size:13.2px;color:#000;font-weight:700;transform:scaleX(0.9313);transform-origin:0 0;">Language</span></div>
<span class="t" style="left:831px;top:236.53px;font-size:13.2px;color:#0a0a0a;transform:scaleX(0.9602);transform-origin:0 0;">SMARTMAP_1069128915</span>
<span class="t" style="left:831px;top:262.53px;font-size:13.2px;color:#0a0a0a;transform:scaleX(1.0329);transform-origin:0 0;">American English</span>
<div style="left:33px;top:314.53px;width:114px;height:17.8px;overflow:hidden;"><span class="t" style="left:0;top:0;font-size:13.2px;color:#000;font-weight:700;transform:scaleX(0.9178);transform-origin:0 0;">Status</span></div>
<div style="left:147px;top:311.8px;width:15px;height:17.7px;background:#fdfdfd;border-top:1px solid #b4b9c0;border-left:1px solid #c3ccd6;"></div>
<svg style="left:150.9px;top:319px;" width="8" height="5" viewBox="0 0 8 5"><path d="M0 0h7.4l-3.7 4.2z" fill="#6a6a6a"/></svg>
<div style="left:166px;top:314.53px;width:114px;height:17.8px;overflow:hidden;"><span class="t" style="left:0;top:0;font-size:13.2px;color:#000;font-weight:700;transform:scaleX(0.9439);transform-origin:0 0;">Upload Errors</span></div>
<div style="left:280px;top:311.8px;width:15px;height:17.7px;background:#fdfdfd;border-top:1px solid #b4b9c0;border-left:1px solid #c3ccd6;"></div>
<svg style="left:283.9px;top:319px;" width="8" height="5" viewBox="0 0 8 5"><path d="M0 0h7.4l-3.7 4.2z" fill="#6a6a6a"/></svg>
<div style="left:299px;top:314.53px;width:114px;height:17.8px;overflow:hidden;"><span class="t" style="left:0;top:0;font-size:13.2px;color:#000;font-weight:700;transform:scaleX(0.9787);transform-origin:0 0;">Description</span></div>
<div style="left:413px;top:311.8px;width:15px;height:17.7px;background:#fdfdfd;border-top:1px solid #b4b9c0;border-left:1px solid #c3ccd6;"></div>
<svg style="left:416.9px;top:319px;" width="8" height="5" viewBox="0 0 8 5"><path d="M0 0h7.4l-3.7 4.2z" fill="#6a6a6a"/></svg>
<svg style="left:423px;top:304.4px;" width="7" height="7" viewBox="0 0 7 7"><path d="M0 0h6.4v6.4z" fill="#ee0f18"/></svg>
<div style="left:432px;top:314.53px;width:114px;height:17.8px;overflow:hidden;"><span class="t" style="left:0;top:0;font-size:13.2px;color:#000;font-weight:700;transform:scaleX(0.9846);transform-origin:0 0;">Item Status</span></div>
<div style="left:546px;top:311.8px;width:15px;height:17.7px;background:#fdfdfd;border-top:1px solid #b4b9c0;border-left:1px solid #c3ccd6;"></div>
<svg style="left:549.9px;top:319px;" width="8" height="5" viewBox="0 0 8 5"><path d="M0 0h7.4l-3.7 4.2z" fill="#6a6a6a"/></svg>
<svg style="left:556px;top:304.4px;" width="7" height="7" viewBox="0 0 7 7"><path d="M0 0h6.4v6.4z" fill="#ee0f18"/></svg>
<div style="left:565px;top:314.53px;width:114px;height:17.8px;overflow:hidden;"><span class="t" style="left:0;top:0;font-size:13.2px;color:#000;font-weight:700;transform:scaleX(0.9499);transform-origin:0 0;">Long Description</span></div>
<div style="left:679px;top:311.8px;width:15px;height:17.7px;background:#fdfdfd;border-top:1px solid #b4b9c0;border-left:1px solid #c3ccd6;"></div>
<svg style="left:682.9px;top:319px;" width="8" height="5" viewBox="0 0 8 5"><path d="M0 0h7.4l-3.7 4.2z" fill="#6a6a6a"/></svg>
<svg style="left:689px;top:304.4px;" width="7" height="7" viewBox="0 0 7 7"><path d="M0 0h6.4v6.4z" fill="#ee0f18"/></svg>
<div style="left:698px;top:314.53px;width:114px;height:17.8px;overflow:hidden;"><span class="t" style="left:0;top:0;font-size:13.2px;color:#000;font-weight:700;transform:scaleX(0.9548);transform-origin:0 0;">Item Class</span></div>
<div style="left:812px;top:311.8px;width:15px;height:17.7px;background:#fdfdfd;border-top:1px solid #b4b9c0;border-left:1px solid #c3ccd6;"></div>
<svg style="left:815.9px;top:319px;" width="8" height="5" viewBox="0 0 8 5"><path d="M0 0h7.4l-3.7 4.2z" fill="#6a6a6a"/></svg>
<svg style="left:822px;top:304.4px;" width="7" height="7" viewBox="0 0 7 7"><path d="M0 0h6.4v6.4z" fill="#ee0f18"/></svg>
<div style="left:831px;top:314.53px;width:114px;height:17.8px;overflow:hidden;"><span class="t" style="left:0;top:0;font-size:13.2px;color:#000;font-weight:700;transform:scaleX(0.9802);transform-origin:0 0;">Organization</span></div>
<div style="left:945px;top:311.8px;width:15px;height:17.7px;background:#fdfdfd;border-top:1px solid #b4b9c0;border-left:1px solid #c3ccd6;"></div>
<svg style="left:948.9px;top:319px;" width="8" height="5" viewBox="0 0 8 5"><path d="M0 0h7.4l-3.7 4.2z" fill="#6a6a6a"/></svg>
<svg style="left:955px;top:304.4px;" width="7" height="7" viewBox="0 0 7 7"><path d="M0 0h6.4v6.4z" fill="#ee0f18"/></svg>
<div style="left:964px;top:314.53px;width:114px;height:17.8px;overflow:hidden;"><span class="t" style="left:0;top:0;font-size:13.2px;color:#000;font-weight:700;transform:scaleX(0.9870);transform-origin:0 0;">Primary Unit of Me</span></div>
<div style="left:1078px;top:311.8px;width:15px;height:17.7px;background:#fdfdfd;border-top:1px solid #b4b9c0;border-left:1px solid #c3ccd6;"></div>
<svg style="left:1081.9px;top:319px;" width="8" height="5" viewBox="0 0 8 5"><path d="M0 0h7.4l-3.7 4.2z" fill="#6a6a6a"/></svg>
<svg style="left:1088px;top:304.4px;" width="7" height="7" viewBox="0 0 7 7"><path d="M0 0h6.4v6.4z" fill="#ee0f18"/></svg>
<div style="left:1097px;top:314.53px;width:114px;height:17.8px;overflow:hidden;"><span class="t" style="left:0;top:0;font-size:13.2px;color:#000;font-weight:700;transform:scaleX(1.0691);transform-origin:0 0;">Item</span></div>
<div style="left:1211px;top:311.8px;width:15px;height:17.7px;background:#fdfdfd;border-top:1px solid #b4b9c0;border-left:1px solid #c3ccd6;"></div>
<svg style="left:1214.9px;top:319px;" width="8" height="5" viewBox="0 0 8 5"><path d="M0 0h7.4l-3.7 4.2z" fill="#6a6a6a"/></svg>
<svg style="left:1221px;top:304.4px;" width="7" height="7" viewBox="0 0 7 7"><path d="M0 0h6.4v6.4z" fill="#ee0f18"/></svg>
<div style="left:299px;top:340.53px;width:130px;height:17.8px;overflow:hidden;"><span class="t" style="left:0;top:0;font-size:13.2px;color:#0a0a0a;transform:scaleX(0.9175);transform-origin:0 0;">ORANGE JUICE, UNSWEETENED</span></div>
<div style="left:432px;top:340.53px;width:130px;height:17.8px;overflow:hidden;"><span class="t" style="left:0;top:0;font-size:13.2px;color:#0a0a0a;transform:scaleX(1.0857);transform-origin:0 0;">Active</span></div>
<div style="left:565px;top:340.53px;width:130px;height:17.8px;overflow:hidden;"><span class="t" style="left:0;top:0;font-size:13.2px;color:#0a0a0a;transform:scaleX(0.9108);transform-origin:0 0;">GRADE A. USDA CERTIFIED</span></div>
<div style="left:698px;top:340.53px;width:130px;height:17.8px;overflow:hidden;"><span class="t" style="left:0;top:0;font-size:13.2px;color:#0a0a0a;transform:scaleX(0.9808);transform-origin:0 0;">DAC Item Class</span></div>
<div style="left:831px;top:340.53px;width:130px;height:17.8px;overflow:hidden;"><span class="t" style="left:0;top:0;font-size:13.2px;color:#0a0a0a;transform:scaleX(0.9185);transform-origin:0 0;">ITEMMASTERORG</span></div>
<div style="left:964px;top:340.53px;width:130px;height:17.8px;overflow:hidden;"><span class="t" style="left:0;top:0;font-size:13.2px;color:#0a0a0a;transform:scaleX(0.8630);transform-origin:0 0;">CASE</span></div>
<div style="left:1097px;top:340.53px;width:130px;height:17.8px;overflow:hidden;"><span class="t" style="left:0;top:0;font-size:13.2px;color:#0a0a0a;transform:scaleX(0.9544);transform-origin:0 0;">0001866</span></div>
<svg style="left:1095px;top:331px;" width="6" height="6" viewBox="0 0 6 6"><path d="M0 0h6.2L0 6.2z" fill="#17801f"/></svg>
<div style="left:299px;top:366.53px;width:130px;height:17.8px;overflow:hidden;"><span class="t" style="left:0;top:0;font-size:13.2px;color:#0a0a0a;transform:scaleX(0.9175);transform-origin:0 0;">ORANGE JUICE, UNSWEETENED</span></div>
<div style="left:432px;top:366.53px;width:130px;height:17.8px;overflow:hidden;"><span class="t" style="left:0;top:0;font-size:13.2px;color:#0a0a0a;transform:scaleX(1.0857);transform-origin:0 0;">Active</span></div>
<div style="left:565px;top:366.53px;width:130px;height:17.8px;overflow:hidden;"><span class="t" style="left:0;top:0;font-size:13.2px;color:#0a0a0a;transform:scaleX(0.9108);transform-origin:0 0;">GRADE A. USDA CERTIFIED</span></div>
<div style="left:698px;top:366.53px;width:130px;height:17.8px;overflow:hidden;"><span class="t" style="left:0;top:0;font-size:13.2px;color:#0a0a0a;transform:scaleX(0.9808);transform-origin:0 0;">DAC Item Class</span></div>
<div style="left:831px;top:366.53px;width:130px;height:17.8px;overflow:hidden;"><span class="t" style="left:0;top:0;font-size:13.2px;color:#0a0a0a;transform:scaleX(0.9412);transform-origin:0 0;">423730F</span></div>
<div style="left:964px;top:366.53px;width:130px;height:17.8px;overflow:hidden;"><span class="t" style="left:0;top:0;font-size:13.2px;color:#0a0a0a;transform:scaleX(0.8630);transform-origin:0 0;">CASE</span></div>
<div style="left:1097px;top:366.53px;width:130px;height:17.8px;overflow:hidden;"><span class="t" style="left:0;top:0;font-size:13.2px;color:#0a0a0a;transform:scaleX(0.9544);transform-origin:0 0;">0001866</span></div>
<svg style="left:1095px;top:357px;" width="6" height="6" viewBox="0 0 6 6"><path d="M0 0h6.2L0 6.2z" fill="#17801f"/></svg>
<div style="left:299px;top:392.53px;width:130px;height:17.8px;overflow:hidden;"><span class="t" style="left:0;top:0;font-size:13.2px;color:#0a0a0a;transform:scaleX(0.9175);transform-origin:0 0;">ORANGE JUICE, UNSWEETENED</span></div>
<div style="left:432px;top:392.53px;width:130px;height:17.8px;overflow:hidden;"><span class="t" style="left:0;top:0;font-size:13.2px;color:#0a0a0a;transform:scaleX(1.0857);transform-origin:0 0;">Active</span></div>
<div style="left:565px;top:392.53px;width:130px;height:17.8px;overflow:hidden;"><span class="t" style="left:0;top:0;font-size:13.2px;color:#0a0a0a;transform:scaleX(0.9108);transform-origin:0 0;">GRADE A. USDA CERTIFIED</span></div>
<div style="left:698px;top:392.53px;width:130px;height:17.8px;overflow:hidden;"><span class="t" style="left:0;top:0;font-size:13.2px;color:#0a0a0a;transform:scaleX(0.9808);transform-origin:0 0;">DAC Item Class</span></div>
<div style="left:831px;top:392.53px;width:130px;height:17.8px;overflow:hidden;"><span class="t" style="left:0;top:0;font-size:13.2px;color:#0a0a0a;transform:scaleX(0.9412);transform-origin:0 0;">423740F</span></div>
<div style="left:964px;top:392.53px;width:130px;height:17.8px;overflow:hidden;"><span class="t" style="left:0;top:0;font-size:13.2px;color:#0a0a0a;transform:scaleX(0.8630);transform-origin:0 0;">CASE</span></div>
<div style="left:1097px;top:392.53px;width:130px;height:17.8px;overflow:hidden;"><span class="t" style="left:0;top:0;font-size:13.2px;color:#0a0a0a;transform:scaleX(0.9544);transform-origin:0 0;">0001866</span></div>
<svg style="left:1095px;top:383px;" width="6" height="6" viewBox="0 0 6 6"><path d="M0 0h6.2L0 6.2z" fill="#17801f"/></svg>
<div style="left:299px;top:418.53px;width:130px;height:17.8px;overflow:hidden;"><span class="t" style="left:0;top:0;font-size:13.2px;color:#0a0a0a;transform:scaleX(0.9175);transform-origin:0 0;">ORANGE JUICE, UNSWEETENED</span></div>
<div style="left:432px;top:418.53px;width:130px;height:17.8px;overflow:hidden;"><span class="t" style="left:0;top:0;font-size:13.2px;color:#0a0a0a;transform:scaleX(1.0857);transform-origin:0 0;">Active</span></div>
<div style="left:565px;top:418.53px;width:130px;height:17.8px;overflow:hidden;"><span class="t" style="left:0;top:0;font-size:13.2px;color:#0a0a0a;transform:scaleX(0.9108);transform-origin:0 0;">GRADE A. USDA CERTIFIED</span></div>
<div style="left:698px;top:418.53px;width:130px;height:17.8px;overflow:hidden;"><span class="t" style="left:0;top:0;font-size:13.2px;color:#0a0a0a;transform:scaleX(0.9808);transform-origin:0 0;">DAC Item Class</span></div>
<div style="left:831px;top:418.53px;width:130px;height:17.8px;overflow:hidden;"><span class="t" style="left:0;top:0;font-size:13.2px;color:#0a0a0a;transform:scaleX(0.9412);transform-origin:0 0;">423805F</span></div>
<div style="left:964px;top:418.53px;width:130px;height:17.8px;overflow:hidden;"><span class="t" style="left:0;top:0;font-size:13.2px;color:#0a0a0a;transform:scaleX(0.8630);transform-origin:0 0;">CASE</span></div>
<div style="left:1097px;top:418.53px;width:130px;height:17.8px;overflow:hidden;"><span class="t" style="left:0;top:0;font-size:13.2px;color:#0a0a0a;transform:scaleX(0.9544);transform-origin:0 0;">0001866</span></div>
<svg style="left:1095px;top:409px;" width="6" height="6" viewBox="0 0 6 6"><path d="M0 0h6.2L0 6.2z" fill="#17801f"/></svg>
<div style="left:299px;top:444.53px;width:130px;height:17.8px;overflow:hidden;"><span class="t" style="left:0;top:0;font-size:13.2px;color:#0a0a0a;transform:scaleX(0.9175);transform-origin:0 0;">ORANGE JUICE, UNSWEETENED</span></div>
<div style="left:432px;top:444.53px;width:130px;height:17.8px;overflow:hidden;"><span class="t" style="left:0;top:0;font-size:13.2px;color:#0a0a0a;transform:scaleX(1.0857);transform-origin:0 0;">Active</span></div>
<div style="left:565px;top:444.53px;width:130px;height:17.8px;overflow:hidden;"><span class="t" style="left:0;top:0;font-size:13.2px;color:#0a0a0a;transform:scaleX(0.9108);transform-origin:0 0;">GRADE A. USDA CERTIFIED</span></div>
<div style="left:698px;top:444.53px;width:130px;height:17.8px;overflow:hidden;"><span class="t" style="left:0;top:0;font-size:13.2px;color:#0a0a0a;transform:scaleX(0.9808);transform-origin:0 0;">DAC Item Class</span></div>
<div style="left:831px;top:444.53px;width:130px;height:17.8px;overflow:hidden;"><span class="t" style="left:0;top:0;font-size:13.2px;color:#0a0a0a;transform:scaleX(0.9412);transform-origin:0 0;">423930F</span></div>
<div style="left:964px;top:444.53px;width:130px;height:17.8px;overflow:hidden;"><span class="t" style="left:0;top:0;font-size:13.2px;color:#0a0a0a;transform:scaleX(0.8630);transform-origin:0 0;">CASE</span></div>
<div style="left:1097px;top:444.53px;width:130px;height:17.8px;overflow:hidden;"><span class="t" style="left:0;top:0;font-size:13.2px;color:#0a0a0a;transform:scaleX(0.9544);transform-origin:0 0;">0001866</span></div>
<svg style="left:1095px;top:435px;" width="6" height="6" viewBox="0 0 6 6"><path d="M0 0h6.2L0 6.2z" fill="#17801f"/></svg>
<div style="left:299px;top:470.53px;width:130px;height:17.8px;overflow:hidden;"><span class="t" style="left:0;top:0;font-size:13.2px;color:#0a0a0a;transform:scaleX(0.9175);transform-origin:0 0;">ORANGE JUICE, UNSWEETENED</span></div>
<div style="left:432px;top:470.53px;width:130px;height:17.8px;overflow:hidden;"><span class="t" style="left:0;top:0;font-size:13.2px;color:#0a0a0a;transform:scaleX(1.0857);transform-origin:0 0;">Active</span></div>
<div style="left:565px;top:470.53px;width:130px;height:17.8px;overflow:hidden;"><span class="t" style="left:0;top:0;font-size:13.2px;color:#0a0a0a;transform:scaleX(0.9108);transform-origin:0 0;">GRADE A. USDA CERTIFIED</span></div>
<div style="left:698px;top:470.53px;width:130px;height:17.8px;overflow:hidden;"><span class="t" style="left:0;top:0;font-size:13.2px;color:#0a0a0a;transform:scaleX(0.9808);transform-origin:0 0;">DAC Item Class</span></div>
<div style="left:831px;top:470.53px;width:130px;height:17.8px;overflow:hidden;"><span class="t" style="left:0;top:0;font-size:13.2px;color:#0a0a0a;transform:scaleX(0.9412);transform-origin:0 0;">423931F</span></div>
<div style="left:964px;top:470.53px;width:130px;height:17.8px;overflow:hidden;"><span class="t" style="left:0;top:0;font-size:13.2px;color:#0a0a0a;transform:scaleX(0.8630);transform-origin:0 0;">CASE</span></div>
<div style="left:1097px;top:470.53px;width:130px;height:17.8px;overflow:hidden;"><span class="t" style="left:0;top:0;font-size:13.2px;color:#0a0a0a;transform:scaleX(0.9544);transform-origin:0 0;">0001866</span></div>
<svg style="left:1095px;top:461px;" width="6" height="6" viewBox="0 0 6 6"><path d="M0 0h6.2L0 6.2z" fill="#17801f"/></svg>
<div style="left:299px;top:496.53px;width:130px;height:17.8px;overflow:hidden;"><span class="t" style="left:0;top:0;font-size:13.2px;color:#0a0a0a;transform:scaleX(0.9175);transform-origin:0 0;">ORANGE JUICE, UNSWEETENED</span></div>
<div style="left:432px;top:496.53px;width:130px;height:17.8px;overflow:hidden;"><span class="t" style="left:0;top:0;font-size:13.2px;color:#0a0a0a;transform:scaleX(1.0857);transform-origin:0 0;">Active</span></div>
<div style="left:565px;top:496.53px;width:130px;height:17.8px;overflow:hidden;"><span class="t" style="left:0;top:0;font-size:13.2px;color:#0a0a0a;transform:scaleX(0.9108);transform-origin:0 0;">GRADE A. USDA CERTIFIED</span></div>
<div style="left:698px;top:496.53px;width:130px;height:17.8px;overflow:hidden;"><span class="t" style="left:0;top:0;font-size:13.2px;color:#0a0a0a;transform:scaleX(0.9808);transform-origin:0 0;">DAC Item Class</span></div>
<div style="left:831px;top:496.53px;width:130px;height:17.8px;overflow:hidden;"><span class="t" style="left:0;top:0;font-size:13.2px;color:#0a0a0a;transform:scaleX(0.9412);transform-origin:0 0;">423980F</span></div>
<div style="left:964px;top:496.53px;width:130px;height:17.8px;overflow:hidden;"><span class="t" style="left:0;top:0;font-size:13.2px;color:#0a0a0a;transform:scaleX(0.8630);transform-origin:0 0;">CASE</span></div>
<div style="left:1097px;top:496.53px;width:130px;height:17.8px;overflow:hidden;"><span class="t" style="left:0;top:0;font-size:13.2px;color:#0a0a0a;transform:scaleX(0.9544);transform-origin:0 0;">0001866</span></div>
<svg style="left:1095px;top:487px;" width="6" height="6" viewBox="0 0 6 6"><path d="M0 0h6.2L0 6.2z" fill="#17801f"/></svg>
<div style="left:299px;top:522.53px;width:130px;height:17.8px;overflow:hidden;"><span class="t" style="left:0;top:0;font-size:13.2px;color:#0a0a0a;transform:scaleX(0.9175);transform-origin:0 0;">ORANGE JUICE, UNSWEETENED</span></div>
<div style="left:432px;top:522.53px;width:130px;height:17.8px;overflow:hidden;"><span class="t" style="left:0;top:0;font-size:13.2px;color:#0a0a0a;transform:scaleX(1.0857);transform-origin:0 0;">Active</span></div>
<div style="left:565px;top:522.53px;width:130px;height:17.8px;overflow:hidden;"><span class="t" style="left:0;top:0;font-size:13.2px;color:#0a0a0a;transform:scaleX(0.9108);transform-origin:0 0;">GRADE A. USDA CERTIFIED</span></div>
<div style="left:698px;top:522.53px;width:130px;height:17.8px;overflow:hidden;"><span class="t" style="left:0;top:0;font-size:13.2px;color:#0a0a0a;transform:scaleX(0.9808);transform-origin:0 0;">DAC Item Class</span></div>
<div style="left:831px;top:522.53px;width:130px;height:17.8px;overflow:hidden;"><span class="t" style="left:0;top:0;font-size:13.2px;color:#0a0a0a;transform:scaleX(0.9590);transform-origin:0 0;">424110F</span></div>
<div style="left:964px;top:522.53px;width:130px;height:17.8px;overflow:hidden;"><span class="t" style="left:0;top:0;font-size:13.2px;color:#0a0a0a;transform:scaleX(0.8630);transform-origin:0 0;">CASE</span></div>
<div style="left:1097px;top:522.53px;width:130px;height:17.8px;overflow:hidden;"><span class="t" style="left:0;top:0;font-size:13.2px;color:#0a0a0a;transform:scaleX(0.9544);transform-origin:0 0;">0001866</span></div>
<svg style="left:1095px;top:513px;" width="6" height="6" viewBox="0 0 6 6"><path d="M0 0h6.2L0 6.2z" fill="#17801f"/></svg>
<div style="left:299px;top:548.53px;width:130px;height:17.8px;overflow:hidden;"><span class="t" style="left:0;top:0;font-size:13.2px;color:#0a0a0a;transform:scaleX(0.9175);transform-origin:0 0;">ORANGE JUICE, UNSWEETENED</span></div>
<div style="left:432px;top:548.53px;width:130px;height:17.8px;overflow:hidden;"><span class="t" style="left:0;top:0;font-size:13.2px;color:#0a0a0a;transform:scaleX(1.0857);transform-origin:0 0;">Active</span></div>
<div style="left:565px;top:548.53px;width:130px;height:17.8px;overflow:hidden;"><span class="t" style="left:0;top:0;font-size:13.2px;color:#0a0a0a;transform:scaleX(0.9108);transform-origin:0 0;">GRADE A. USDA CERTIFIED</span></div>
<div style="left:698px;top:548.53px;width:130px;height:17.8px;overflow:hidden;"><span class="t" style="left:0;top:0;font-size:13.2px;color:#0a0a0a;transform:scaleX(0.9808);transform-origin:0 0;">DAC Item Class</span></div>
<div style="left:831px;top:548.53px;width:130px;height:17.8px;overflow:hidden;"><span class="t" style="left:0;top:0;font-size:13.2px;color:#0a0a0a;transform:scaleX(0.9412);transform-origin:0 0;">424140F</span></div>
<div style="left:964px;top:548.53px;width:130px;height:17.8px;overflow:hidden;"><span class="t" style="left:0;top:0;font-size:13.2px;color:#0a0a0a;transform:scaleX(0.8630);transform-origin:0 0;">CASE</span></div>
<div style="left:1097px;top:548.53px;width:130px;height:17.8px;overflow:hidden;"><span class="t" style="left:0;top:0;font-size:13.2px;color:#0a0a0a;transform:scaleX(0.9544);transform-origin:0 0;">0001866</span></div>
<svg style="left:1095px;top:539px;" width="6" height="6" viewBox="0 0 6 6"><path d="M0 0h6.2L0 6.2z" fill="#17801f"/></svg>
<div style="left:299px;top:574.53px;width:130px;height:17.8px;overflow:hidden;"><span class="t" style="left:0;top:0;font-size:13.2px;color:#0a0a0a;transform:scaleX(0.9175);transform-origin:0 0;">ORANGE JUICE, UNSWEETENED</span></div>
<div style="left:432px;top:574.53px;width:130px;height:17.8px;overflow:hidden;"><span class="t" style="left:0;top:0;font-size:13.2px;color:#0a0a0a;transform:scaleX(1.0857);transform-origin:0 0;">Active</span></div>
<div style="left:565px;top:574.53px;width:130px;height:17.8px;overflow:hidden;"><span class="t" style="left:0;top:0;font-size:13.2px;color:#0a0a0a;transform:scaleX(0.9108);transform-origin:0 0;">GRADE A. USDA CERTIFIED</span></div>
<div style="left:698px;top:574.53px;width:130px;height:17.8px;overflow:hidden;"><span class="t" style="left:0;top:0;font-size:13.2px;color:#0a0a0a;transform:scaleX(0.9808);transform-origin:0 0;">DAC Item Class</span></div>
<div style="left:831px;top:574.53px;width:130px;height:17.8px;overflow:hidden;"><span class="t" style="left:0;top:0;font-size:13.2px;color:#0a0a0a;transform:scaleX(0.9412);transform-origin:0 0;">423010F</span></div>
<div style="left:964px;top:574.53px;width:130px;height:17.8px;overflow:hidden;"><span class="t" style="left:0;top:0;font-size:13.2px;color:#0a0a0a;transform:scaleX(0.8630);transform-origin:0 0;">CASE</span></div>
<div style="left:1097px;top:574.53px;width:130px;height:17.8px;overflow:hidden;"><span class="t" style="left:0;top:0;font-size:13.2px;color:#0a0a0a;transform:scaleX(0.9544);transform-origin:0 0;">0001866</span></div>
<svg style="left:1095px;top:565px;" width="6" height="6" viewBox="0 0 6 6"><path d="M0 0h6.2L0 6.2z" fill="#17801f"/></svg>
<div style="left:299px;top:600.53px;width:130px;height:17.8px;overflow:hidden;"><span class="t" style="left:0;top:0;font-size:13.2px;color:#0a0a0a;transform:scaleX(0.9175);transform-origin:0 0;">ORANGE JUICE, UNSWEETENED</span></div>
<div style="left:432px;top:600.53px;width:130px;height:17.8px;overflow:hidden;"><span class="t" style="left:0;top:0;font-size:13.2px;color:#0a0a0a;transform:scaleX(1.0857);transform-origin:0 0;">Active</span></div>
<div style="left:565px;top:600.53px;width:130px;height:17.8px;overflow:hidden;"><span class="t" style="left:0;top:0;font-size:13.2px;color:#0a0a0a;transform:scaleX(0.9108);transform-origin:0 0;">GRADE A. USDA CERTIFIED</span></div>
<div style="left:698px;top:600.53px;width:130px;height:17.8px;overflow:hidden;"><span class="t" style="left:0;top:0;font-size:13.2px;color:#0a0a0a;transform:scaleX(0.9808);transform-origin:0 0;">DAC Item Class</span></div>
<div style="left:831px;top:600.53px;width:130px;height:17.8px;overflow:hidden;"><span class="t" style="left:0;top:0;font-size:13.2px;color:#0a0a0a;transform:scaleX(0.9590);transform-origin:0 0;">423011F</span></div>
<div style="left:964px;top:600.53px;width:130px;height:17.8px;overflow:hidden;"><span class="t" style="left:0;top:0;font-size:13.2px;color:#0a0a0a;transform:scaleX(0.8630);transform-origin:0 0;">CASE</span></div>
<div style="left:1097px;top:600.53px;width:130px;height:17.8px;overflow:hidden;"><span class="t" style="left:0;top:0;font-size:13.2px;color:#0a0a0a;transform:scaleX(0.9544);transform-origin:0 0;">0001866</span></div>
<svg style="left:1095px;top:591px;" width="6" height="6" viewBox="0 0 6 6"><path d="M0 0h6.2L0 6.2z" fill="#17801f"/></svg>
<div style="left:299px;top:626.53px;width:130px;height:17.8px;overflow:hidden;"><span class="t" style="left:0;top:0;font-size:13.2px;color:#0a0a0a;transform:scaleX(0.9175);transform-origin:0 0;">ORANGE JUICE, UNSWEETENED</span></div>
<div style="left:432px;top:626.53px;width:130px;height:17.8px;overflow:hidden;"><span class="t" style="left:0;top:0;font-size:13.2px;color:#0a0a0a;transform:scaleX(1.0857);transform-origin:0 0;">Active</span></div>
<div style="left:565px;top:626.53px;width:130px;height:17.8px;overflow:hidden;"><span class="t" style="left:0;top:0;font-size:13.2px;color:#0a0a0a;transform:scaleX(0.9108);transform-origin:0 0;">GRADE A. USDA CERTIFIED</span></div>
<div style="left:698px;top:626.53px;width:130px;height:17.8px;overflow:hidden;"><span class="t" style="left:0;top:0;font-size:13.2px;color:#0a0a0a;transform:scaleX(0.9808);transform-origin:0 0;">DAC Item Class</span></div>
<div style="left:831px;top:626.53px;width:130px;height:17.8px;overflow:hidden;"><span class="t" style="left:0;top:0;font-size:13.2px;color:#0a0a0a;transform:scaleX(0.9412);transform-origin:0 0;">423060F</span></div>
<div style="left:964px;top:626.53px;width:130px;height:17.8px;overflow:hidden;"><span class="t" style="left:0;top:0;font-size:13.2px;color:#0a0a0a;transform:scaleX(0.8630);transform-origin:0 0;">CASE</span></div>
<div style="left:1097px;top:626.53px;width:130px;height:17.8px;overflow:hidden;"><span class="t" style="left:0;top:0;font-size:13.2px;color:#0a0a0a;transform:scaleX(0.9544);transform-origin:0 0;">0001866</span></div>
<svg style="left:1095px;top:617px;" width="6" height="6" viewBox="0 0 6 6"><path d="M0 0h6.2L0 6.2z" fill="#17801f"/></svg>
<svg style="left:1095px;top:643px;" width="6" height="6" viewBox="0 0 6 6"><path d="M0 0h6.2L0 6.2z" fill="#17801f"/></svg>
<div style="left:4px;top:329.3px;width:1217px;height:29.7px;border:3.2px solid #e94347;box-shadow:1px 2px 4px rgba(0,0,0,0.42), inset 1px 2px 3px rgba(0,0,0,0.18);"></div>
<div style="left:1226px;top:333px;width:41px;height:41px;border-radius:50%;background:#f54044;box-shadow:1px 3px 5px rgba(0,0,0,0.45);"></div>
<span class="t" style="left:1235px;top:343.08px;font-size:22px;color:#fff;letter-spacing:-0.984px;">17</span>
</div>
</body></html>
